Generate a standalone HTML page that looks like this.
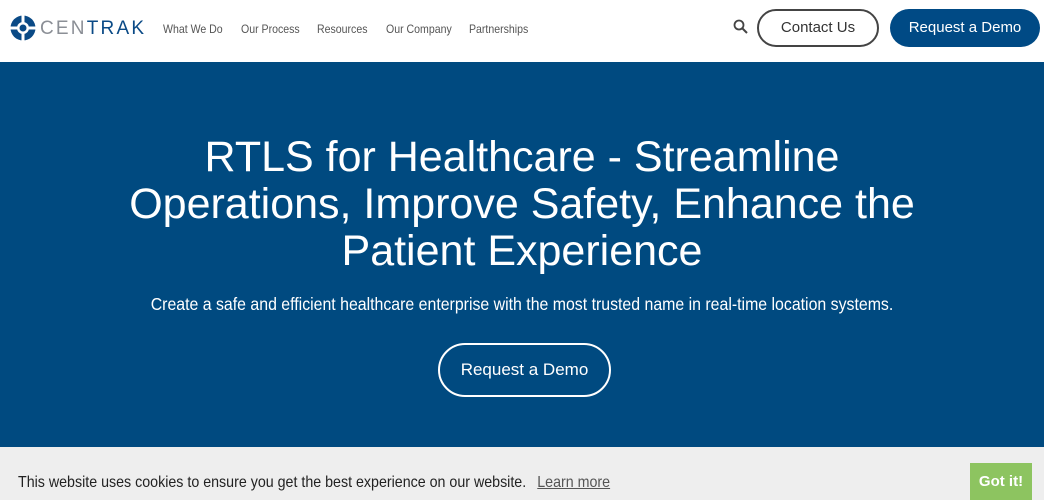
<!DOCTYPE html>
<html><head><meta charset="utf-8"><style>
*{margin:0;padding:0;box-sizing:border-box}
body{width:1044px;height:500px;overflow:hidden;font-family:"Liberation Sans",sans-serif;background:#fff;position:relative}
.hdr{position:absolute;top:0;left:0;width:1044px;height:62px;background:#fff}
.logo{position:absolute;left:10px;top:15px}
.brand{position:absolute;left:40px;top:18px;font-size:19px;letter-spacing:2.2px;color:#8b8f96}
.brand b{color:#0a4a86;font-weight:normal}
.nav a{position:absolute;top:22px;font-size:12px;color:#555;text-decoration:none;transform:scaleX(0.88);transform-origin:left;white-space:nowrap}
.btn1{position:absolute;left:757px;top:9px;width:122px;height:38px;border:2px solid #444;border-radius:20px;font-size:15px;color:#333;text-align:center;line-height:34px}
.btn2{position:absolute;left:890px;top:9px;width:150px;height:38px;background:#004a85;border-radius:20px;font-size:15px;color:#fff;text-align:center;line-height:38px}
.hero{position:absolute;top:62px;left:0;width:1044px;height:385px;background:#004a80;color:#fff;text-align:center}
h1{position:absolute;top:72px;left:0;width:1044px;font-weight:normal;font-size:43px;line-height:47px;transform:scaleX(1.0)}
.sub{position:absolute;top:232px;left:0;width:1044px;font-size:17.5px;transform:scaleX(0.907)}
.hbtn{position:absolute;left:438px;top:281px;width:173px;height:54px;border:2px solid #fff;border-radius:27px;font-size:17px;line-height:50px}
.ck{position:absolute;top:447px;left:0;width:1044px;height:53px;background:#eeeeee;font-size:16px;color:#222}
.ck span{position:absolute;left:18px;top:27px;transform:scaleX(0.89);transform-origin:left;white-space:nowrap}
.ck u{color:#555;margin-left:8px}
.got{position:absolute;left:970px;top:16px;width:62px;height:37px;background:#8dc460;color:#fff;font-weight:bold;font-size:15px;text-align:center;line-height:37px}
</style></head><body>
<div class="hdr">
<svg class="logo" width="26" height="26" viewBox="0 0 26 26"><circle cx="13" cy="13" r="12.5" fill="#0a4a86"/><path d="M13 0V26M0 13H26" stroke="#fff" stroke-width="3"/><circle cx="13" cy="13" r="6" fill="#fff"/><circle cx="13" cy="13" r="3.5" fill="#0a4a86"/></svg>
<div class="brand">CEN<b>TRAK</b></div>
<div class="nav"><a style="left:163px">What We Do</a><a style="left:241px">Our Process</a><a style="left:317px">Resources</a><a style="left:386px">Our Company</a><a style="left:469px">Partnerships</a></div>
<svg style="position:absolute;left:733px;top:19px" width="15" height="15" viewBox="0 0 15 15"><circle cx="6" cy="6" r="4.5" fill="none" stroke="#444" stroke-width="1.8"/><path d="M9.5 9.5L14 14" stroke="#444" stroke-width="2"/></svg>
<div class="btn1">Contact Us</div>
<div class="btn2">Request a Demo</div>
</div>
<div class="hero">
<h1>RTLS for Healthcare - Streamline<br>Operations, Improve Safety, Enhance the<br>Patient Experience</h1>
<div class="sub">Create a safe and efficient healthcare enterprise with the most trusted name in real-time location systems.</div>
<div class="hbtn">Request a Demo</div>
</div>
<div class="ck"><span>This website uses cookies to ensure you get the best experience on our website. <u>Learn more</u></span><div class="got">Got it!</div></div>
</body></html>
